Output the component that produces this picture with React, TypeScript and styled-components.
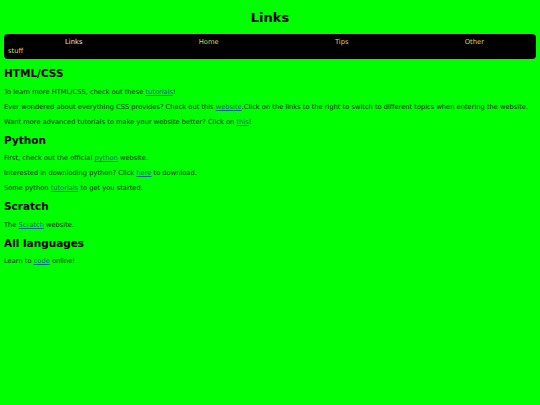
import React from "react";
import styled, { createGlobalStyle } from "styled-components";

const Global = createGlobalStyle`
  html, body { margin: 0; padding: 0; }
  body {
    background: #00ff00;
    margin: 0 4px;
    font-family: "DejaVu Sans", Verdana, sans-serif;
    font-size: 6.7px;
    color: #000;
  }
`;

const Title = styled.h1`
  font-size: 13px;
  line-height: 15px;
  font-weight: bold;
  text-align: center;
  margin: 10px 0 9px;
`;

const Nav = styled.nav`
  background: #000;
  border-radius: 4px;
  padding: 4px 4px;
  line-height: 8.5px;
  font-size: 6.8px;
`;

const NavLink = styled.a<{ $current?: boolean }>`
  color: ${(p) => (p.$current ? "#e8e8e8" : "#d8d850")};
  text-decoration: none;
  padding: 0 57px;
`;

const Heading = styled.h2`
  font-size: 10.5px;
  line-height: 12px;
  font-weight: bold;
  margin: 8px 0 8.5px;
`;

const Para = styled.p`
  font-size: 6.7px;
  line-height: 8px;
  margin: 7px 0;
  color: #062a06;
  white-space: nowrap;
`;

const Link = styled.a`
  color: #00688a;
  text-decoration: underline;
`;

export default function App() {
  return (
    <>
      <Global />
      <Title>Links</Title>
      <Nav>
        <NavLink href="#" $current>Links</NavLink> <NavLink href="#">Home</NavLink>{" "}
        <NavLink href="#">Tips</NavLink> <NavLink href="#">Other stuff</NavLink>
      </Nav>
      <Heading>HTML/CSS</Heading>
      <Para>
        To learn more HTML/CSS, check out these <Link href="#">tutorials</Link>!
      </Para>
      <Para>
        Ever wondered about everything CSS provides? Check out this <Link href="#">website</Link>.Click on
        the links to the right to switch to different topics when entering the website.
      </Para>
      <Para>
        Want more advanced tutorials to make your website better? Click on <Link href="#">this</Link>!
      </Para>
      <Heading>Python</Heading>
      <Para>
        First, check out the official <Link href="#">python</Link> website.
      </Para>
      <Para>
        Interested in downloding python? Click <Link href="#">here</Link> to download.
      </Para>
      <Para>
        Some python <Link href="#">tutorials</Link> to get you started.
      </Para>
      <Heading>Scratch</Heading>
      <Para>
        The <Link href="#">Scratch</Link> website.
      </Para>
      <Heading>All languages</Heading>
      <Para>
        Learn to <Link href="#">code</Link> online!
      </Para>
    </>
  );
}
